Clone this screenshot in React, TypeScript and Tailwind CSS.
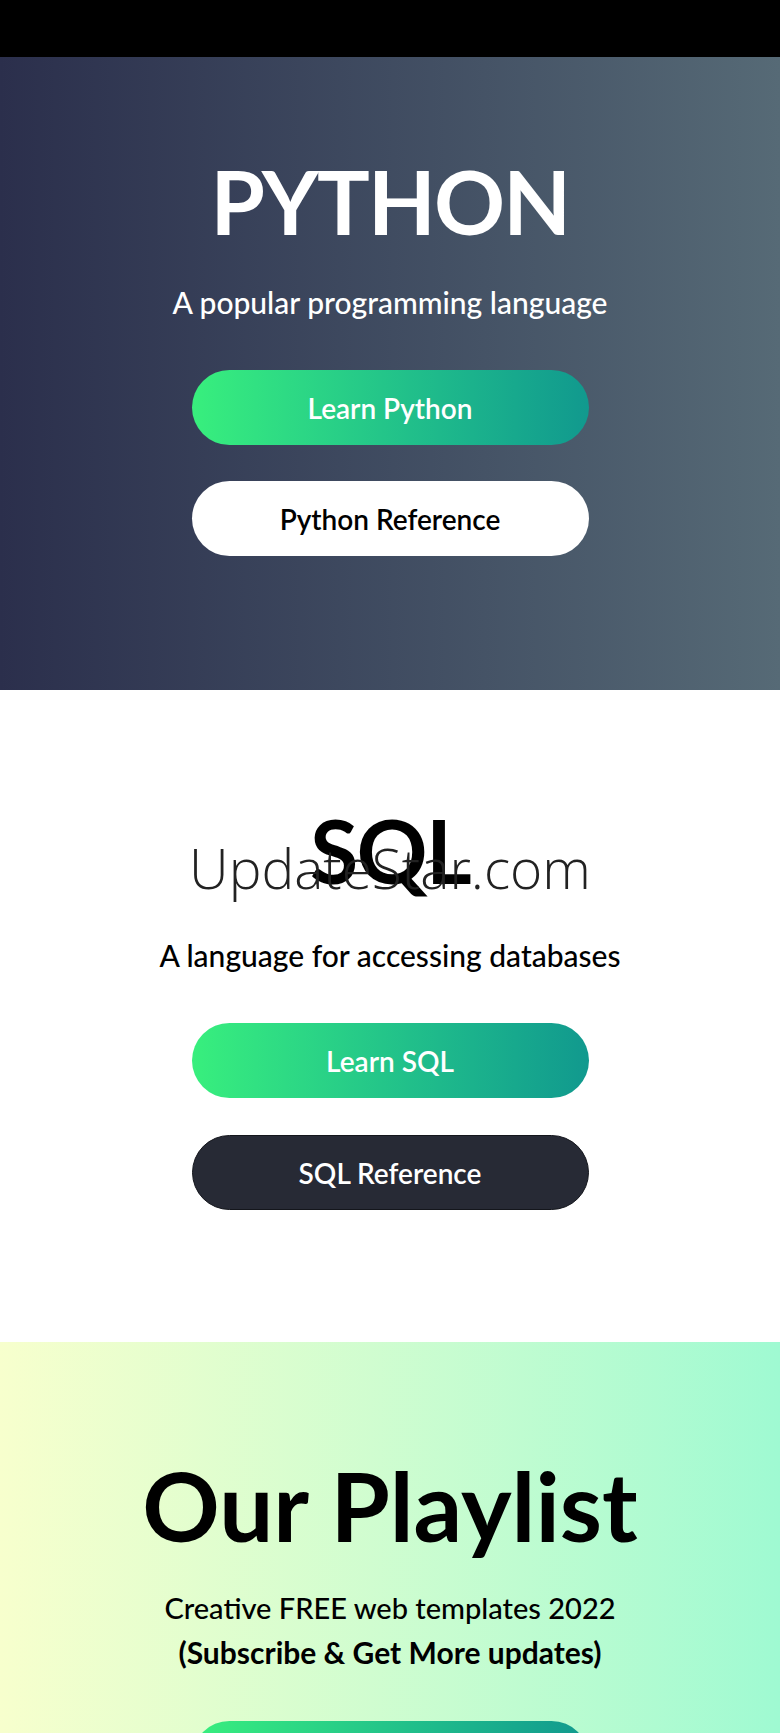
import React from 'react';

const font = { fontFamily: 'Lato, "Noto Sans", sans-serif' };

function PillButton({ label, variant }: { label: string; variant: 'green' | 'white' | 'dark' }) {
  const styles = {
    green: 'bg-linear-to-r from-[#38ef7d] to-[#11998e] text-white',
    white: 'bg-white text-black',
    dark: 'bg-[#272a35] text-white border border-[#14161c]',
  };
  return (
    <a
      href="#"
      className={`flex h-[75px] w-[397px] items-center justify-center rounded-full text-[28px] font-semibold ${styles[variant]}`}
    >
      {label}
    </a>
  );
}

export default function App() {
  return (
    <div className="w-full" style={font}>
      {/* Top bar */}
      <div className="h-[57px] bg-black" />

      {/* Python */}
      <section className="flex h-[633px] flex-col items-center bg-linear-to-r from-[#2b2f4c] to-[#566a76] pt-[100px] text-white">
        <h1 className="text-[88px] font-bold leading-none tracking-[-0.02em]">PYTHON</h1>
        <p className="mt-[42px] text-[30px] font-medium leading-none">A popular programming language</p>
        <div className="mt-[53px] flex flex-col gap-[36px]">
          <PillButton label="Learn Python" variant="green" />
          <PillButton label="Python Reference" variant="white" />
        </div>
      </section>

      {/* SQL */}
      <section className="relative flex h-[652px] flex-col items-center bg-white pt-[116px] text-black">
        <h1 className="text-[88px] font-bold leading-none tracking-[-0.02em]">SQL</h1>
        <p className="mt-[46px] text-[30px] font-medium leading-none">A language for accessing databases</p>
        <div className="mt-[53px] flex flex-col gap-[37px]">
          <PillButton label="Learn SQL" variant="green" />
          <PillButton label="SQL Reference" variant="dark" />
        </div>
        {/* watermark */}
        <span
          className="pointer-events-none absolute left-0 right-0 top-[150px] text-center text-[55px] font-light leading-none text-[#222]"
          style={{ fontFamily: '"Open Sans", sans-serif' }}
        >
          UpdateStar.com
        </span>
      </section>

      {/* Playlist */}
      <section className="flex flex-col items-center bg-linear-to-r from-[#f7ffcd] to-[#9ffad2] pt-[115px] text-black">
        <h2 className="text-[96px] font-bold leading-none">Our Playlist</h2>
        <p className="mt-[32px] text-[29px] font-medium leading-[45px]">Creative FREE web templates 2022</p>
        <p className="text-[30px] font-bold leading-[45px]">(Subscribe &amp; Get More updates)</p>
        <div className="mt-[46px] pb-[60px]">
          <PillButton label="Watch Now" variant="green" />
        </div>
      </section>
    </div>
  );
}
